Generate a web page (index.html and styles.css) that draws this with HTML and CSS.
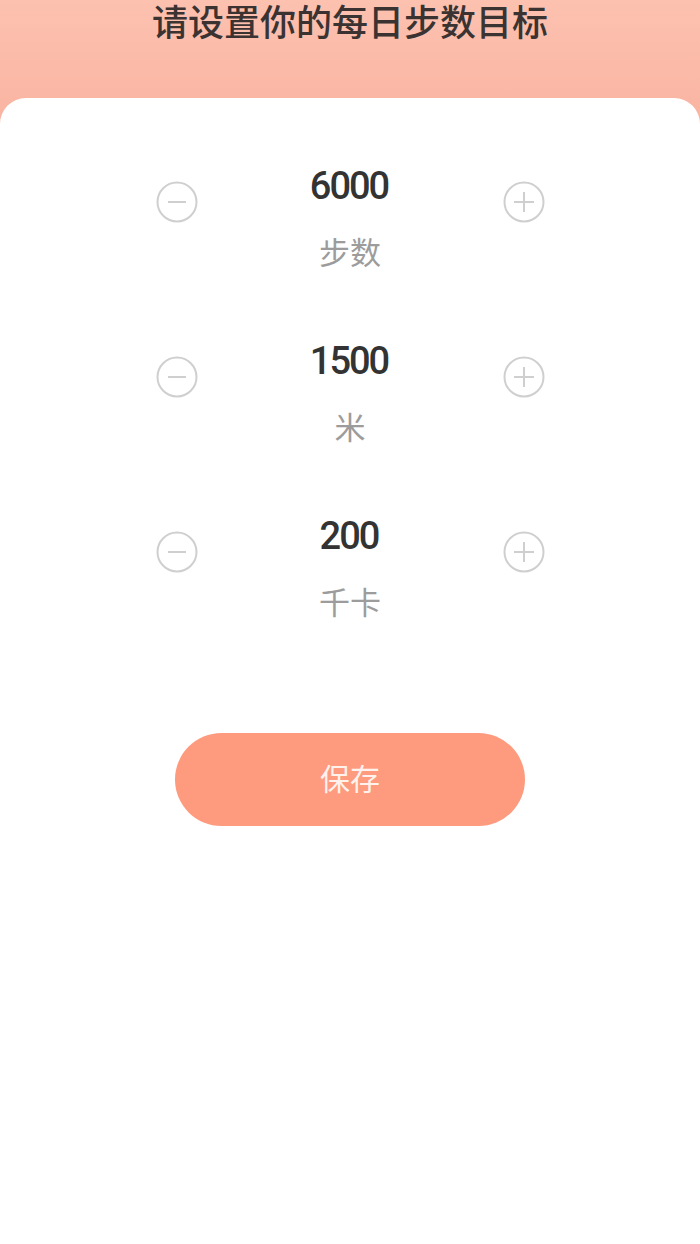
FILE: index.html
```html
<!DOCTYPE html>
<html lang="zh">
<head>
<meta charset="utf-8">
<title>每日步数目标</title>
<link rel="stylesheet" href="styles.css">
</head>
<body>
<div class="page">
  <header class="header">
    <h1 class="title">请设置你的每日步数目标</h1>
  </header>
  <main class="card">
    <div class="rows">
      <div class="row">
        <button class="step-btn" aria-label="减少">
          <svg viewBox="0 0 42 42" width="42" height="42"><circle cx="21" cy="21" r="19.5" fill="none" stroke="#cfcfcf" stroke-width="2"/><line x1="12" y1="21" x2="30" y2="21" stroke="#cfcfcf" stroke-width="2"/></svg>
        </button>
        <div class="value">
          <div class="num">6000</div>
          <div class="unit">步数</div>
        </div>
        <button class="step-btn" aria-label="增加">
          <svg viewBox="0 0 42 42" width="42" height="42"><circle cx="21" cy="21" r="19.5" fill="none" stroke="#cfcfcf" stroke-width="2"/><line x1="11" y1="21" x2="31" y2="21" stroke="#cfcfcf" stroke-width="2"/><line x1="21" y1="11" x2="21" y2="31" stroke="#cfcfcf" stroke-width="2"/></svg>
        </button>
      </div>
      <div class="row">
        <button class="step-btn" aria-label="减少">
          <svg viewBox="0 0 42 42" width="42" height="42"><circle cx="21" cy="21" r="19.5" fill="none" stroke="#cfcfcf" stroke-width="2"/><line x1="12" y1="21" x2="30" y2="21" stroke="#cfcfcf" stroke-width="2"/></svg>
        </button>
        <div class="value">
          <div class="num">1500</div>
          <div class="unit">米</div>
        </div>
        <button class="step-btn" aria-label="增加">
          <svg viewBox="0 0 42 42" width="42" height="42"><circle cx="21" cy="21" r="19.5" fill="none" stroke="#cfcfcf" stroke-width="2"/><line x1="11" y1="21" x2="31" y2="21" stroke="#cfcfcf" stroke-width="2"/><line x1="21" y1="11" x2="21" y2="31" stroke="#cfcfcf" stroke-width="2"/></svg>
        </button>
      </div>
      <div class="row">
        <button class="step-btn" aria-label="减少">
          <svg viewBox="0 0 42 42" width="42" height="42"><circle cx="21" cy="21" r="19.5" fill="none" stroke="#cfcfcf" stroke-width="2"/><line x1="12" y1="21" x2="30" y2="21" stroke="#cfcfcf" stroke-width="2"/></svg>
        </button>
        <div class="value">
          <div class="num">200</div>
          <div class="unit">千卡</div>
        </div>
        <button class="step-btn" aria-label="增加">
          <svg viewBox="0 0 42 42" width="42" height="42"><circle cx="21" cy="21" r="19.5" fill="none" stroke="#cfcfcf" stroke-width="2"/><line x1="11" y1="21" x2="31" y2="21" stroke="#cfcfcf" stroke-width="2"/><line x1="21" y1="11" x2="21" y2="31" stroke="#cfcfcf" stroke-width="2"/></svg>
        </button>
      </div>
    </div>
    <button class="save">保存</button>
  </main>
</div>
</body>
</html>
```
FILE: styles.css
```css
* { box-sizing: border-box; }
html, body { margin: 0; padding: 0; }
body {
  font-family: "Noto Sans CJK SC", "Noto Sans", sans-serif;
  background: #ffffff;
}
.page {
  width: 700px;
  height: 1244px;
  overflow: hidden;
  background: linear-gradient(180deg, #fdc1b0 0px, #f9b3a0 130px, #ffffff 131px);
  display: flex;
  flex-direction: column;
}
.header {
  height: 98px;
  flex: none;
}
.title {
  margin: 0;
  font-size: 36px;
  line-height: 40px;
  font-weight: 500;
  color: #3a3332;
  text-align: center;
}
.card {
  flex: 1;
  background: #ffffff;
  border-radius: 26px 26px 0 0;
  padding-top: 68px;
  display: flex;
  flex-direction: column;
  align-items: center;
}
.rows {
  display: flex;
  flex-direction: column;
  gap: 70px;
}
.row {
  width: 389px;
  display: flex;
  align-items: flex-start;
}
.step-btn {
  flex: none;
  width: 42px;
  height: 42px;
  margin-top: 15px;
  padding: 0;
  border: 0;
  background: transparent;
  display: block;
}
.step-btn svg { display: block; }
.value {
  flex: 1;
  display: flex;
  flex-direction: column;
  align-items: center;
}
.num {
  font-family: Roboto, "Liberation Sans", sans-serif;
  font-weight: 500;
  font-size: 38px;
  line-height: 40px;
  letter-spacing: -2px;
  padding-right: 2px;
  color: #333333;
}
.unit {
  margin-top: 25px;
  font-size: 31px;
  line-height: 40px;
  color: #9c9c9c;
}
.save {
  margin-top: 112px;
  width: 350px;
  height: 93px;
  border: 0;
  border-radius: 47px;
  background: #fe9a7e;
  color: #fff1ec;
  font-family: "Noto Sans CJK SC", sans-serif;
  font-size: 30px;
  line-height: 40px;
  padding: 0 0 5px 0;
}
```
